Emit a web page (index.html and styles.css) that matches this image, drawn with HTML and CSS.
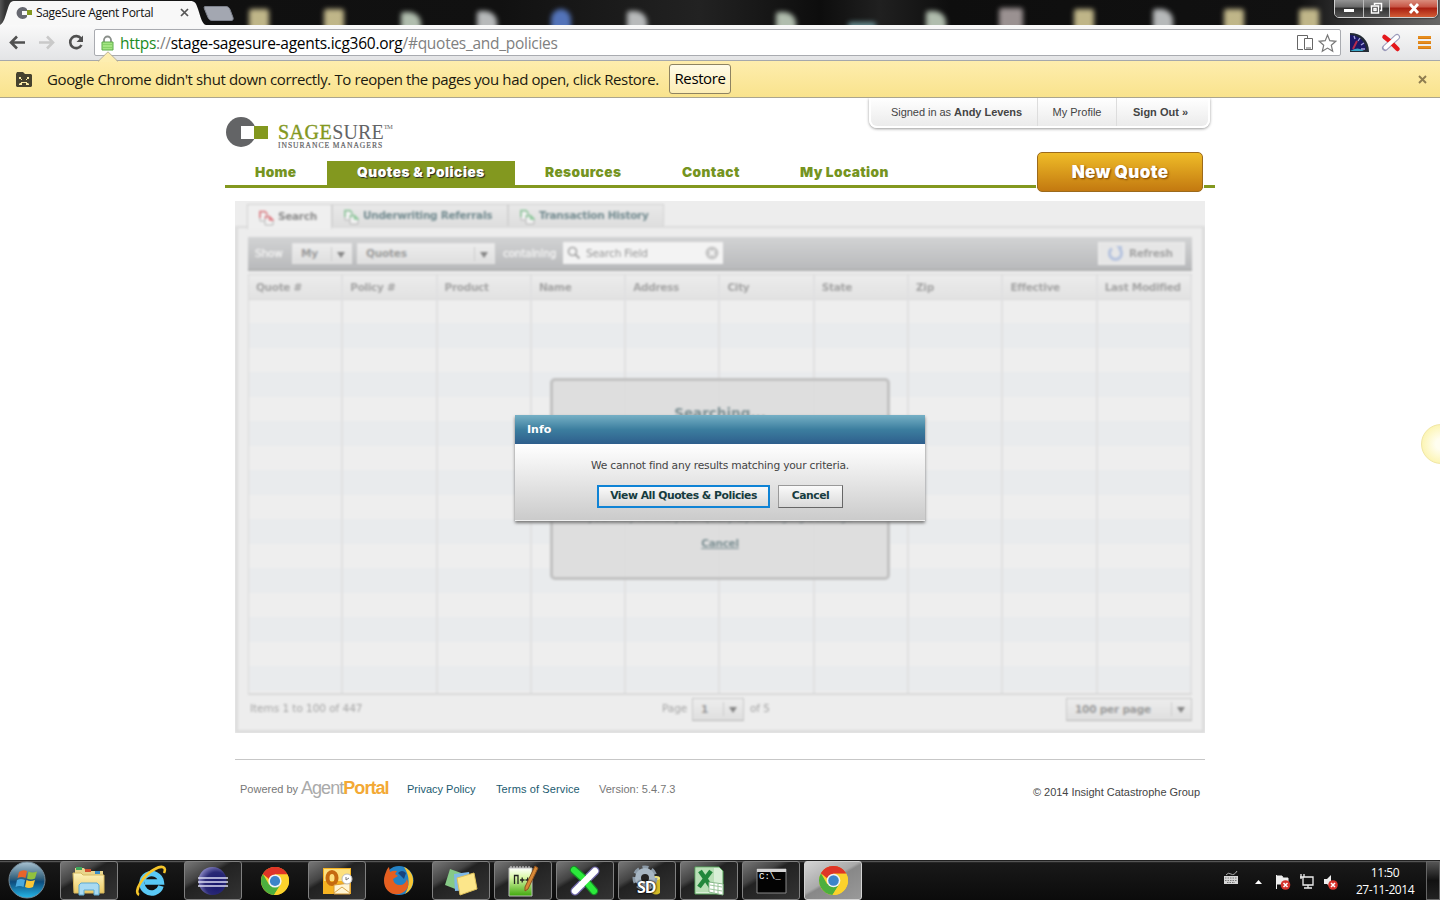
FILE: index.html
```html
<!DOCTYPE html>
<html lang="en">
<head>
<meta charset="utf-8">
<title>SageSure Agent Portal</title>
<link rel="stylesheet" href="styles.css">
</head>
<body>
<svg width="0" height="0" class="defs">
  <defs>
    <linearGradient id="orb" x1="0" y1="0" x2="0" y2="1"><stop offset="0" stop-color="#a9c3d2"/><stop offset=".45" stop-color="#35627d"/><stop offset=".55" stop-color="#0d4b7c"/><stop offset="1" stop-color="#25b8ea"/></linearGradient>
    <linearGradient id="folder" x1="0" y1="0" x2="0" y2="1"><stop offset="0" stop-color="#fdf3bd"/><stop offset="1" stop-color="#ecc963"/></linearGradient>
    <radialGradient id="eclipse" cx=".65" cy=".6" r=".7"><stop offset="0" stop-color="#15146b"/><stop offset=".6" stop-color="#2a2976"/><stop offset="1" stop-color="#8d8ac6"/></radialGradient>
    <linearGradient id="npp" x1="0" y1="0" x2="0" y2="1"><stop offset="0" stop-color="#fff"/><stop offset=".35" stop-color="#d9f7a6"/><stop offset="1" stop-color="#3fa80c"/></linearGradient>
    <symbol id="chrome" viewBox="0 0 28 28">
      <circle cx="14" cy="14" r="14" fill="#fbd22c"/>
      <path d="M14 14 1.9 7A14 14 0 0 1 26.1 7H14z" fill="#df3527"/>
      <path d="M1.900 7A14 14 0 0 0 13 28L19.500 17.500 14 14 8 17.500z" fill="#4caf3e"/>
      <path d="M14 7.200H26.200A14 14 0 0 1 13 28L19.800 17.400z" fill="#fbd22c"/>
      <path d="M1.900 7A14 14 0 0 1 26.200 7.200H14L8 12z" fill="#df3527"/>
      <circle cx="14" cy="14" r="6.600" fill="#f3f3f3"/><circle cx="14" cy="14" r="5.100" fill="#3d84c9"/>
    </symbol>
    <symbol id="pages" viewBox="0 0 15 16">
      <path d="M1 2h5l2 2v7H1z" fill="#f4f4f4" stroke="#b5b5b5"/><path d="M1 8V1.500H6l2.500 3" fill="none" stroke="currentColor" stroke-width="1.600"/>
      <path d="M6 7h5l3 3v5H6z" fill="#f4f4f4" stroke="#b5b5b5"/><path d="M6.500 9V6.500h4L14 10h-3.500V7" fill="none" stroke="currentColor" stroke-width="1.400"/>
    </symbol>
  </defs>
</svg>

<header class="tabstrip">
  <svg class="tab-shape" width="206" height="25" viewBox="0 0 206 25"><path d="M0 25C4 23 5 17 8 8 10 2 11 1 15 1H190C195 1 196 3 198 9 201 18 202 24 206 25z" fill="#f8f8f8"/></svg>
  <div class="tab">
    <svg width="17" height="14" viewBox="0 0 17 14"><path d="M11 3A6 6 0 1 0 11 11V9H6V5h5z" fill="#666870"/><path d="M11 4h5v5h-5z" fill="#83981f"/></svg>
    <span class="tab-title">SageSure Agent Portal</span>
    <svg class="tab-x" width="9" height="9" viewBox="0 0 9 9"><path d="m1 1 7 7m0-7-7 7" stroke="#555" stroke-width="1.700"/></svg>
  </div>
  <svg class="newtab" width="31" height="15" viewBox="0 0 31 15"><path d="M2 .5H23c2 0 3 1 4 3l3 8c.6 2 0 3-2 3H9c-2 0-3-1-4-3L1.500 3C1 1.500 1 .5 2 .5z" fill="#a3a7b1" stroke="#7d818c"/></svg>
  <i class="blob tan b1"></i><i class="blob tan b2"></i><i class="blob green b3"></i><i class="blob grey b4"></i><i class="blob blue b5"></i><i class="blob grey b6"></i><i class="blob green b7"></i><i class="blob teal b8"></i><i class="blob green b9"></i><i class="blob rose b10"></i><i class="blob tan b11"></i><i class="blob grey b12"></i><i class="blob tan b13"></i><i class="blob tan b14"></i>
  <div class="winbtns">
    <span class="wb min"><svg width="12" height="12" viewBox="0 0 12 12"><path d="M1 7h10v3H1z" fill="#fff"/></svg></span>
    <span class="wb max"><svg width="13" height="13" viewBox="0 0 13 13"><path d="M4.500 3V1.500h7v7H10M1.500 4h7v7h-7zM4 6.500h2v2H4z" fill="none" stroke="#fff" stroke-width="1.500"/></svg></span>
    <span class="wb cls"><svg width="12" height="11" viewBox="0 0 12 11"><path d="m2 1 8 9m0-9-8 9" stroke="#fff" stroke-width="2.800"/></svg></span>
  </div>
</header>

<div class="toolbar">
  <svg class="nav-ic" width="84" height="18" viewBox="0 0 84 18">
    <path d="M17 8.500H3M9 2.500l-6 6 6 6" fill="none" stroke="#505050" stroke-width="2.600"/>
    <path d="M31 8.500h14M39 2.500l6 6-6 6" fill="none" stroke="#c9c9c9" stroke-width="2.600"/>
    <path d="M73 4.500A6 6 0 1 0 73.500 11" fill="none" stroke="#505050" stroke-width="2.600"/><path d="M75 1.500V8h-6.500z" fill="#505050"/>
  </svg>
  <div class="omnibox">
    <svg class="lock" width="13" height="16" viewBox="0 0 13 16"><path d="M3 8V5a3.500 3.500 0 0 1 7 0v3" fill="none" stroke="#8a8f8a" stroke-width="1.800"/><path d="M1 7h11v8H1z" fill="#a4e583" stroke="#5cab4b"/><path d="M2 9.500h9M2 12.500h9" stroke="#86d267"/></svg>
    <span class="url"><b>https</b>://<em>stage-sagesure-agents.icg360.org</em>/#quotes_and_policies</span>
    <svg class="omni-ic" width="42" height="20" viewBox="0 0 42 20"><path d="M8 16.500H2.500v-14h10V5M9.500 5.500h8v11h-8z" fill="none" stroke="#666"/><path d="M11 15h5" stroke="#666"/><path d="m32.500 2 2.300 5.700 6 .6-4.500 4 1.400 6-5.200-3.200-5.200 3.200 1.400-6-4.500-4 6-.6z" fill="#fff" stroke="#777" stroke-width="1.200"/></svg>
  </div>
  <svg class="ext" width="92" height="22" viewBox="0 0 92 22">
    <path d="M6 1c11 0 19 7 19 19H6z" fill="#232b35"/><path d="M6 3c9 0 16 7 16 15H6z" fill="#1c1868"/><path d="M6 19q8-5 14 0z" fill="#38a7c8"/><path d="m9 17 4-8" stroke="#b82a4c" stroke-width="2"/><path d="m10 4 1 3m5-1-2 3m6 2-3 2m4 4h-4" stroke="#a6a4dc" stroke-width="1.300"/>
    <path d="M41 16 53 5" stroke="#9999b9" stroke-width="6" stroke-linecap="round"/><path d="m40.500 5 5 4 8 8" fill="none" stroke="#e4181c" stroke-width="4.500" stroke-linecap="round"/><path d="M41.500 15.500 53 5" stroke="#fff" stroke-width="4" stroke-linecap="round"/>
    <path d="M74 5.500h13M74 10.500h13M74 15.500h13" stroke="#d77b11" stroke-width="3"/><path d="M74 5h13M74 10h13M74 15h13" stroke="#f5a02d"/>
  </svg>
</div>

<div class="infobar">
  <svg class="notch" width="20" height="11" viewBox="0 0 20 11"><path d="M0 11 10 1l10 10z" fill="#fdeeb0"/><path d="M0 10.500 10 .8l10 9.700" fill="none" stroke="#b9b194"/></svg>
  <svg width="18" height="17" viewBox="0 0 18 17"><path d="M1 3 2 1h6l2 2h6l1 1v11l-1 1H2l-1-1z" fill="#46422f"/><path d="M4 6h2v2H4zm2 2h1v1H6zm6-2h2v2h-2zm-1 2h1v1h-1zM6 11h6v1H6zm-1 1h2v2H4v-1zm6 0h2l1 1v1h-3z" fill="#fbeaa5"/></svg>
  <span class="info-text">Google Chrome didn't shut down correctly. To reopen the pages you had open, click Restore.</span>
  <span class="restore">Restore</span>
  <svg class="info-x" width="9" height="9" viewBox="0 0 9 9"><path d="m1 1 7 7m0-7-7 7" stroke="#8e7d50" stroke-width="1.900"/></svg>
</div>

<main class="page">
  <div class="wrap">
    <div class="top">
      <div class="logo">
        <svg width="43" height="31" viewBox="0 0 43 31"><circle cx="16" cy="16" r="15" fill="#636466"/><path d="M16 10h14v13H16z" fill="#fff"/><path d="M29 10h14v13H29z" fill="#83981f"/></svg>
        <div class="logo-words"><div class="l1"><b>SAGE</b>SURE<i>TM</i></div><div class="l2">INSURANCE MANAGERS</div></div>
      </div>
      <div class="user"><span class="u1">Signed in as <b>Andy Levens</b></span><span class="u2">My Profile</span><span class="u3">Sign Out »</span></div>
    </div>
    <nav class="nav">
      <a class="n1">Home</a><a class="on">Quotes &amp; Policies</a><a class="n3">Resources</a><a class="n4">Contact</a><a class="n5">My Location</a>
      <div class="newquote">New Quote</div>
    </nav>

    <section class="panel">
      <div class="soft">
        <div class="tabs">
          <div class="t t1 sel"><svg width="15" height="16" color="#df7c83"><use href="#pages"/></svg><span>Search</span></div>
          <div class="t t2"><svg width="15" height="16" color="#8cc79a"><use href="#pages"/></svg><span>Underwriting Referrals</span></div>
          <div class="t t3"><svg width="15" height="16" color="#8cc79a"><use href="#pages"/></svg><span>Transaction History</span></div>
        </div>
        <div class="body">
          <div class="filter">
            <span class="lbl show">Show</span>
            <span class="dd my">My<i></i></span>
            <span class="dd quotes">Quotes<i></i></span>
            <span class="lbl cont">containing</span>
            <span class="search"><svg width="14" height="14" viewBox="0 0 14 14"><circle cx="5.500" cy="5.500" r="4" fill="none" stroke="#a8a8a8" stroke-width="1.700"/><path d="m8.500 8.500 4 4" stroke="#a8a8a8" stroke-width="2"/></svg><span>Search Field</span><svg class="clr" width="14" height="14" viewBox="0 0 14 14"><circle cx="7" cy="7" r="6.500" fill="#c6c6c6"/><path d="m4.500 4.500 5 5m0-5-5 5" stroke="#f4f4f4" stroke-width="1.800"/></svg></span>
            <span class="refresh"><svg width="17" height="17" viewBox="0 0 17 17"><path d="M5 3.500A6 6 0 1 0 12 3.500" fill="none" stroke="#b8c5df" stroke-width="3.200"/><path d="M9 1h6v6z" fill="#b8c5df"/></svg>Refresh</span>
          </div>
          <div class="grid">
            <div class="col"><b>Quote #</b></div><div class="col"><b>Policy #</b></div><div class="col"><b>Product</b></div><div class="col"><b>Name</b></div><div class="col"><b>Address</b></div><div class="col"><b>City</b></div><div class="col"><b>State</b></div><div class="col"><b>Zip</b></div><div class="col"><b>Effective</b></div><div class="col"><b>Last Modified</b></div>
          </div>
          <div class="pager">
            <span class="items">Items 1 to 100 of 447</span>
            <span class="pg">Page</span><span class="dd pnum">1<i></i></span><span class="of">of 5</span>
            <span class="dd per">100 per page<i></i></span>
          </div>
        </div>
        <div class="searching"><b class="s1">Searching...</b><span class="s2">you may refine your query by changing settings</span><b class="s3">Cancel</b></div>
      </div>
      <div class="modal">
        <div class="mhead">Info</div>
        <div class="mbody">
          <p>We cannot find any results matching your criteria.</p>
          <div class="mbtns"><span class="mb primary">View All Quotes &amp; Policies</span><span class="mb cancel">Cancel</span></div>
        </div>
      </div>
    </section>

    <footer class="foot">
      <span class="pow">Powered by</span><span class="ap">Agent<b>Portal</b></span><a class="f1">Privacy Policy</a><a class="f2">Terms of Service</a><span class="ver">Version: 5.4.7.3</span><span class="copy">© 2014 Insight Catastrophe Group</span>
    </footer>
  </div>
  <div class="bubble"></div>
</main>

<div class="taskbar">
  <svg class="start" width="38" height="38" viewBox="0 0 38 38"><circle cx="19" cy="19" r="18" fill="url(#orb)" stroke="#748997"/><path d="M11 11q4-3 8-1l-1.500 7q-4-2-8 0z" fill="#e8642a"/><path d="M20.500 10.500q4 2 8.500 0l-2 7q-4 2-8 0z" fill="#91c13e"/><path d="M9 19q4-2 8 0l-1.500 7q-4-2-8 0z" fill="#49a9df"/><path d="M18.500 19q4 2 8.500 0l-2 7q-4 2-8 0z" fill="#fac637"/></svg>
  <div class="apps">
    <div class="app open"><svg width="34" height="32" viewBox="0 0 34 32"><path d="M3 3h9l2 3h17v22H3z" fill="#e8d58c"/><path d="M4 2h6v3H4z" fill="#3fa65b"/><path d="M13 4h6v3h-6z" fill="#d24f2e"/><path d="M23 6h5v3h-5z" fill="#3c8ec6"/><path d="M1 8h8l2 2h21v18H2z" fill="url(#folder)" stroke="#d8b961"/><path d="M7 30V20l2-2h16l2 2v10h-5v-5H12v5z" fill="#a8daf2" stroke="#5ca9d1"/></svg></div>
    <div class="app"><svg width="32" height="32" viewBox="0 0 32 32"><path d="M26 21A9.700 9.700 0 1 1 26.300 17H10" fill="none" stroke="#59c8f5" stroke-width="5.500"/><path d="M4 30C-2 27 8 10 20 4c7-4 12-2 9 4" fill="none" stroke="#f5c52a" stroke-width="2.600"/></svg></div>
    <div class="app open"><svg width="32" height="30" viewBox="0 0 32 30"><circle cx="15.500" cy="15" r="14" fill="url(#eclipse)"/><path d="M1 12h30M1 16h30M1 20h30" stroke="#dcdcf3" stroke-width="1.300"/></svg></div>
    <div class="app"><svg width="28" height="28"><use href="#chrome"/></svg></div>
    <div class="app open"><svg width="31" height="30" viewBox="0 0 31 30"><path d="M1 2h28v26H1z" fill="#f6b322"/><path d="M2 3h26v12H2z" fill="#fde07d"/><ellipse cx="10" cy="12" rx="4.500" ry="6" fill="none" stroke="#c56a10" stroke-width="4"/><path d="m12 19 16-2v11H12z" fill="#fff5d4" stroke="#d79a37"/><path d="m12 27 8-6 8 6" fill="none" stroke="#d7a64d"/><circle cx="25" cy="13" r="5" fill="#fff" stroke="#bbb"/><path d="M24 11v3l3-2" fill="none" stroke="#777"/></svg></div>
    <div class="app"><svg width="32" height="31" viewBox="0 0 32 31"><circle cx="16" cy="15.500" r="14.500" fill="#2482c5"/><path d="M21 2c12 5 12 21 1 27 5-8 5-18-1-27z" fill="#f7c633"/><path d="M3 7c1-3 2-4 3-5l1 5q4-2 7-1l-2 3 3 2-5 3q1 6 7 6 5 0 7-6 4 10-5 14C9 33-4 23 3 7z" fill="#e65f20"/><path d="M15 8q4-4 8 0l-2 6q-3-3-6-6z" fill="#15447f"/></svg></div>
    <div class="app open"><svg width="34" height="30" viewBox="0 0 34 30"><path d="m6 3 14 5-6 16-13-5z" fill="#86c987"/><path d="m10 8 15-2 3 18-17 1z" fill="#7fb8e5"/><path d="m13 12 17-5 3 16-17 6z" fill="#fce68a" stroke="#dfc15b"/></svg></div>
    <div class="app open"><svg width="32" height="32" viewBox="0 0 32 32"><path d="M2 3h23v28H2z" fill="url(#npp)" stroke="#bbb"/><path d="M4 3v-2m3 2v-2m3 2v-2m3 2v-2m3 2v-2m3 2v-2m3 2v-2" stroke="#ddd"/><path d="M7.500 19v-8.500h3.500v8.500M13 15h4.500M15.200 12.500v5M18.500 15h4.500M20.700 12.500v5" fill="none" stroke="#222" stroke-width="1.300"/><path d="m28 1 3 2-10 21-3 2v-4z" fill="#d88936" stroke="#8d5321"/></svg></div>
    <div class="app open"><svg width="32" height="32" viewBox="0 0 32 32"><path d="M26 6 6 26" stroke="#6d64a6" stroke-width="9" stroke-linecap="round"/><path d="M26 6 6 26" stroke="#fff" stroke-width="6.500" stroke-linecap="round"/><path d="m5 5 9 8 11 13" fill="none" stroke="#168c26" stroke-width="8.500" stroke-linecap="round"/><path d="m5 5 9 8 11 13" fill="none" stroke="#2bea3b" stroke-width="6" stroke-linecap="round"/><path d="m12 20 8-8" stroke="#fff" stroke-width="6.500"/></svg></div>
    <div class="app open sd"><svg width="32" height="32" viewBox="0 0 32 32"><path d="M21 13h8v15q-4 3-8 0z" fill="#d3bb28"/><ellipse cx="25" cy="13" rx="4" ry="2" fill="#f4e67a"/><circle cx="14" cy="13" r="9" fill="none" stroke="#8d9ba8" stroke-width="7" stroke-dasharray="5 3"/><circle cx="14" cy="13" r="7" fill="none" stroke="#a7b6c3" stroke-width="6"/></svg><strong>SD</strong></div>
    <div class="app open"><svg width="32" height="32" viewBox="0 0 32 32"><path d="M2 2h24l4 4v23H2z" fill="#d9efd7" stroke="#57a55b"/><path d="M3 3h18v24H3z" fill="#b9dfb6"/><path d="M7 6 18 22M18 6 6 22" stroke="#22873c" stroke-width="4.500"/><path d="m16 17 14 2v11l-14-3z" fill="#fff" stroke="#89b98b"/><path d="m17 20 12 2m-12 2 12 2M21 18v10M25 19v10" stroke="#9cc69c"/></svg></div>
    <div class="app open cmd"><svg width="31" height="26" viewBox="0 0 31 26"><path d="M1 1h29v24H1z" fill="#030303" stroke="#888"/><path d="M1 1h29v3H1z" fill="#d4d4d4"/></svg><em>C:\_</em></div>
    <div class="app open active"><svg width="29" height="29" viewBox="0 0 28 28"><use href="#chrome"/></svg></div>
  </div>
  <svg class="tray" width="118" height="20" viewBox="0 0 118 20">
    <path d="M3 4q2-3 5-1t6-3" fill="none" stroke="#aaa"/><path d="M1 5h14v8H1z" fill="#d7d7d7"/><path d="M2 7h12M2 9.500h12M4 11.500h8" stroke="#777" stroke-dasharray="1.500 1"/>
    <path d="m32 13 3.500-4 3.500 4z" fill="#fff"/>
    <path d="M53.500 4v14M54 5h5l1 2h5v6H54z" fill="#eee" stroke="#eee"/><circle cx="62.500" cy="14" r="4.800" fill="#d6332c"/><path d="m60.500 12 4 4m0-4-4 4" stroke="#fff" stroke-width="1.500"/>
    <path d="M81 6h10v8H81zM86 14v3m-4 0h8M79 3v5m3-5v3m-4 0h6" transform="translate(-1 0)" fill="none" stroke="#eee" stroke-width="1.300"/>
    <path d="M101 8h3l4-4v13l-4-4h-3z" fill="#eee"/><circle cx="110" cy="14" r="4.800" fill="#d6332c"/><path d="m108 12 4 4m0-4-4 4" stroke="#fff" stroke-width="1.500"/>
  </svg>
  <div class="clock"><div>11:50</div><div>27-11-2014</div></div>
  <div class="peek"></div>
</div>
</body>
</html>
```
FILE: styles.css
```css
* { box-sizing: border-box; }
body { margin: 0; width: 1440px; height: 900px; overflow: hidden; background: #fff; font-family: "Liberation Sans", Arial, sans-serif; }
svg { display: block; flex: none; }
.defs { position: absolute; }
span, a, b { white-space: nowrap; }

/* browser chrome */
.tabstrip { position: relative; height: 25px; background: linear-gradient(90deg, #555 0, #333 5px, #101010 210px, #111 500px, #222 700px, #0d0d0d 820px, #202020 880px, #0e0e0e 950px, #111 1300px, #555 1400px, #666); overflow: hidden; display: flex; }
.tab-shape { position: absolute; left: 0; top: 0; }
.tab { position: relative; width: 202px; height: 25px; padding-left: 16px; display: flex; align-items: center; flex: none; }
.tab-title { font: 12px/16px "Open Sans", "Noto Sans", sans-serif; color: #111; margin-left: 3px; width: 143px; letter-spacing: -.33px; }
.tab-x { margin-left: 1px; }
.newtab { margin: 6px 0 0 1px; }
.blob { position: absolute; top: 9px; width: 20px; height: 22px; border-radius: 3px; filter: blur(2.500px); opacity: .9; }
.tan { background: #d3c896; } .green { background: #c2d0bf; border-radius: 3px 12px 3px 3px; } .grey { background: #c9cccd; border-radius: 3px 12px 3px 3px; } .blue { background: #5a7ecb; border-radius: 12px 12px 3px 3px; } .teal { background: #6c9499; } .rose { background: #aaa0a0; }
.b1 { left: 249px; } .b2 { left: 324px; } .b3 { left: 401px; top: 12px; } .b4 { left: 477px; top: 11px; } .b5 { left: 551px; } .b6 { left: 627px; top: 11px; } .b7 { left: 776px; top: 12px; } .b8 { left: 848px; top: 22px; width: 28px; } .b9 { left: 926px; top: 11px; } .b10 { left: 999px; width: 24px; top: 8px; } .b11 { left: 1074px; } .b12 { left: 1153px; } .b13 { left: 1224px; } .b14 { left: 1299px; }
.winbtns { position: absolute; left: 1334px; top: -2px; height: 20px; width: 104px; border: 1px solid #d0d0d0; border-radius: 0 0 5px 5px; overflow: hidden; display: flex; box-shadow: 0 0 2px #000; }
.wb { display: flex; align-items: center; justify-content: center; background: linear-gradient(#9a9a9a, #686868 45%, #2f2f2f 50%, #555); }
.min { width: 28px; } .max { width: 27px; border-left: 1px solid #bbb; border-right: 1px solid #bbb; } .cls { flex: 1; background: linear-gradient(#dd9484, #c65343 45%, #a81e10 50%, #d25c35); }
.toolbar { height: 36px; background: linear-gradient(#f9f9f9, #e3e4e6); border-bottom: 1px solid #a5a8ac; display: flex; align-items: flex-start; }
.nav-ic { margin: 9px 0 0 8px; }
.omnibox { margin: 4px 0 0 2px; width: 1247px; height: 27px; border: 1px solid #a9abb0; border-radius: 2px; background: #fff; display: flex; align-items: center; padding-left: 6px; }
.url { margin-left: 6px; font: 15.500px/22px "Open Sans", "Noto Sans", sans-serif; color: #808080; letter-spacing: -.27px; }
.url b { font-weight: 400; color: #1c8b24; } .url em { font-style: normal; color: #000; }
.omni-ic { margin-left: auto; margin-right: 3px; }
.ext { margin: 7px 0 0 3px; }
.infobar { position: relative; height: 37px; background: linear-gradient(#feedad, #f9e38d); border-bottom: 1px solid #aaa58f; display: flex; align-items: center; padding-left: 15px; }
.notch { position: absolute; left: 98px; top: -10px; }
.info-text { margin-left: 14px; width: 622px; font: 15px/20px "Open Sans", "Noto Sans", sans-serif; color: #1b1a10; letter-spacing: -.38px; }
.restore { width: 62px; height: 30px; border: 1px solid #8e8361; border-radius: 3px; background: linear-gradient(#fffbe8, #fcedb5); font: 15px/27px "Open Sans", "Noto Sans", sans-serif; text-align: center; letter-spacing: -.4px; }
.info-x { margin-left: auto; margin-right: 13px; }

/* site header */
.page { position: relative; height: 762px; overflow: hidden; background: #fff; }
.wrap { width: 990px; margin: 0 auto; }
.top { height: 63px; display: flex; justify-content: space-between; align-items: flex-start; }
.logo { display: flex; padding-top: 18px; }
.logo-words { padding: 6px 0 0 10px; color: #636466; font-family: "Liberation Serif", serif; }
.l1 { font-size: 20px; line-height: 20px; height: 20px; white-space: nowrap; display: flex; align-items: flex-start; letter-spacing: .1px; } .l1 b { font-weight: 400; color: #83981f; -webkit-text-stroke: .4px #83981f; letter-spacing: .5px; } .l1 i { font: 6.500px/7px "Liberation Serif", serif; letter-spacing: -.8px; padding-top: 1px; }
.l2 { font-size: 7.600px; line-height: 7px; letter-spacing: .95px; white-space: nowrap; -webkit-text-stroke: .2px #636466; }
.user { display: flex; width: 341px; height: 30px; margin-right: 5px; border: 2px solid #fff; border-top: 0; border-radius: 0 0 8px 8px; box-shadow: 0 1px 3px #999; background: linear-gradient(#fff, #ebebeb); font-size: 11px; line-height: 29px; color: #444; }
.u1 { width: 167px; padding-left: 20px; border-right: 1px solid #ddd; letter-spacing: -.04px; } .u2 { width: 79px; text-align: center; border-right: 1px solid #ddd; } .u3 { flex: 1; text-align: center; font-weight: 700; padding-right: 4px; }
.nav { position: relative; display: flex; height: 27px; border-bottom: 3px solid #83981f; font: 900 13.700px/23px Inter, "Liberation Sans", sans-serif; color: #75941f; letter-spacing: .38px; }
.nav a { display: block; height: 24px; padding: 0 30px; }
.nav .n1 { width: 102px; } .nav .on { width: 188px; color: #fff; background: #83981f; text-shadow: 1px 1px 1px #222; letter-spacing: .52px; } .nav .n3 { width: 137px; } .nav .n4 { width: 118px; }
.newquote { position: absolute; left: 812px; top: -9px; width: 166px; height: 40px; border: 1px solid #9c6a1c; border-radius: 5px; background: linear-gradient(#efbc28, #c37910); color: #fff; font-size: 17px; line-height: 39px; text-align: center; text-shadow: 1px 1px 2px #7a4200; box-shadow: 0 0 0 1px #fff; letter-spacing: .35px; }

/* search panel */
.panel { position: relative; margin: 13px 10px 0; height: 532px; background: #ededed; overflow: hidden; font: 11px/14px "DejaVu Sans", Verdana, sans-serif; color: #a4a4a4; }
.soft { position: relative; height: 532px; filter: blur(.8px); }
.tabs { height: 25px; padding: 3px 0 0 12px; display: flex; }
.t { height: 22px; display: flex; align-items: center; padding-left: 11px; gap: 4px; font-weight: 700; font-size: 10.500px; color: #738b90; background: linear-gradient(#e9e9e9, #dedede); border: 1px solid #d2d2d2; border-bottom: 0; white-space: nowrap; letter-spacing: -.3px; }
.t1 { width: 85px; height: 25px; background: #efefef; color: #8c8c8c; position: relative; z-index: 1; } .t2 { width: 176px; } .t3 { width: 156px; }
.t svg { margin-top: 2px; } .t span { margin-top: -2px; }
.body { height: 507px; border: 3px solid #dcdcdc; border-top-width: 2px; padding: 9px 10px 0; }
.filter { height: 34px; background: linear-gradient(#d2d3d4, #b9babc); border-bottom: 2px solid #aeafb0; display: flex; align-items: center; padding: 0 7px 0 7px; }
.lbl { color: #f0f0f0; font-size: 10.500px; letter-spacing: -.2px; -webkit-text-stroke: .4px #f0f0f0; }
.show { width: 37px; } .cont { width: 60px; }
.dd { position: relative; height: 21px; line-height: 18px; background: linear-gradient(#ededed, #dfdfdf); padding-left: 8px; font-weight: 700; font-size: 10.500px; border: 1px solid #e6e6e6; color: #9c9c9c; letter-spacing: -.2px; }
.dd i { position: absolute; right: 6px; top: 8px; border: 4px solid transparent; border-top: 6px solid #858585; border-bottom: 0; }
.dd::after { content: ""; position: absolute; right: 19px; top: 3px; height: 14px; border-left: 1px solid #ccc; }
.my { width: 60px; margin-right: 5px; } .quotes { width: 138px; margin-right: 8px; }
.search { width: 160px; height: 22px; background: #f3f3f3; display: flex; align-items: center; padding: 0 4px; font-size: 10.500px; letter-spacing: -.15px; }
.search > span { margin-left: 5px; color: #989898; } .clr { margin-left: auto; }
.refresh { margin-left: auto; width: 87px; height: 23px; background: #e6e6e6; border: 1px solid #eee; display: flex; align-items: center; padding-left: 8px; gap: 5px; font-weight: 700; font-size: 10.500px; letter-spacing: -.3px; }
.grid { height: 421px; margin-top: 3px; border: 1px solid #d9d9d9; border-bottom-width: 2px; border-right: 0; display: flex; background: linear-gradient(#ececec, #e2e2e2) 0 0 / 100% 24px no-repeat, repeating-linear-gradient(#eee 0 24.500px, #e9ebed 24.500px 49px) 0 24px; }
.col { flex: 1; border-right: 2px solid #e0e0e1; }
.col b { display: block; height: 25px; padding-left: 7px; line-height: 24px; border-bottom: 1px solid #d9d9d9; font-size: 10.500px; letter-spacing: -.32px; white-space: nowrap; }
.pager { position: relative; display: flex; padding: 3px 0 0 2px; height: 28px; line-height: 20px; font-size: 10.500px; letter-spacing: -.05px; }
.items { width: 412px; } .pg { width: 30px; } .pnum { width: 52px; margin-right: 6px; }
.pager .dd { height: 23px; line-height: 21px; border: 1px solid #c8c8c8; border-bottom-color: #b5b5b5; }
.per { width: 126px; margin-left: auto; }
.searching { position: absolute; left: 315px; top: 177px; width: 340px; height: 202px; border: 3px solid #c2c2c2; border-radius: 5px; background: rgba(221,221,221,.93); display: flex; flex-direction: column; align-items: center; color: #7d9094; }
.s1 { font-size: 13.500px; line-height: 16px; margin-top: 24px; } .s2 { margin-top: 89px; font-size: 11px; line-height: 16px; height: 16px; } .s3 { margin-top: 9px; font-size: 10.500px; line-height: 16px; text-decoration: underline; letter-spacing: -.3px; }

/* info dialog */
.modal { position: absolute; left: 280px; top: 214px; width: 410px; height: 106px; box-shadow: 0 2px 3px #777; color: #444; }
.mhead { height: 29px; background: linear-gradient(#76b0c5, #3c7e9f 50%, #2e5e8c); color: #fff; font-weight: 700; line-height: 29px; padding-left: 12px; font-size: 11px; }
.mbody { height: 77px; background: linear-gradient(#fff, #cbcbcb); border-bottom: 1px solid #f0f0f0; }
.mbody p { margin: 0; padding-top: 14px; height: 41px; text-align: center; font-size: 10.700px; letter-spacing: -.21px; line-height: 15px; }
.mbtns { display: flex; padding-left: 82px; gap: 8px; }
.mb { height: 23px; line-height: 19px; text-align: center; font-weight: 700; color: #173c3f; font-size: 10.800px; letter-spacing: -.48px; background: linear-gradient(#fafafa, #d9d9d9); border: 1px solid #999; border-right-color: #666; border-bottom-color: #666; }
.primary { width: 173px; border: 2px solid #0f83d5; line-height: 18px; } .cancel { width: 65px; }

/* footer */
.foot { margin: 26px 10px 0; border-top: 1px solid #c7c7c7; padding: 18px 5px 0; display: flex; font-size: 11px; line-height: 23px; color: #777; }
.pow { width: 61px; } .ap { width: 106px; font-size: 18px; line-height: 20px; letter-spacing: -.95px; color: #aaa; } .ap b { color: #f3a935; }
.foot a { color: #1c5b70; } .f1 { width: 89px; } .f2 { width: 103px; letter-spacing: .12px; }
.copy { margin-left: auto; padding-top: 3px; color: #444; letter-spacing: -.02px; }
.bubble { position: absolute; left: 1421px; top: 326px; width: 40px; height: 40px; border-radius: 50%; background: radial-gradient(#fffef0 20%, #fcf5b6 70%); border: 1px solid #f0e6a4; }

/* taskbar */
.taskbar { position: relative; height: 40px; display: flex; background: linear-gradient(#777 0, #333 1px, #191919 2px, #0b0b0b); border-top: 1px solid #222; }
.start { margin: 0 0 0 8px; }
.apps { display: flex; gap: 4px; margin-left: 14px; }
.app { position: relative; width: 58px; height: 39px; border: 1px solid transparent; border-radius: 3px; display: flex; align-items: center; justify-content: center; }
.open { border-color: #808080; background: linear-gradient(150deg, #777 0, #444 32%, #222 40%, #333); }
.active { border-color: #d3d3d3; background: linear-gradient(150deg, #d4d4d4, #aaa 45%, #888 50%, #999); }
.sd strong { position: absolute; left: 18px; top: 16px; color: #fff; font: 700 16px/18px "Open Sans", sans-serif; letter-spacing: -1px; text-shadow: 0 0 2px #000, 0 0 2px #000; }
.cmd em { position: absolute; left: 16px; top: 10px; color: #fff; font: 9px/10px "Liberation Mono", monospace; }
.tray { position: absolute; left: 1223px; top: 10px; }
.clock { position: absolute; left: 1350px; top: 3px; width: 70px; color: #fff; text-align: center; font: 12px/17px "Open Sans", "Noto Sans", sans-serif; letter-spacing: -.45px; white-space: nowrap; }
.peek { position: absolute; left: 1426px; top: 0; width: 14px; height: 39px; border: 1px solid #666; background: linear-gradient(#555, #111 50%, #222); }
```
